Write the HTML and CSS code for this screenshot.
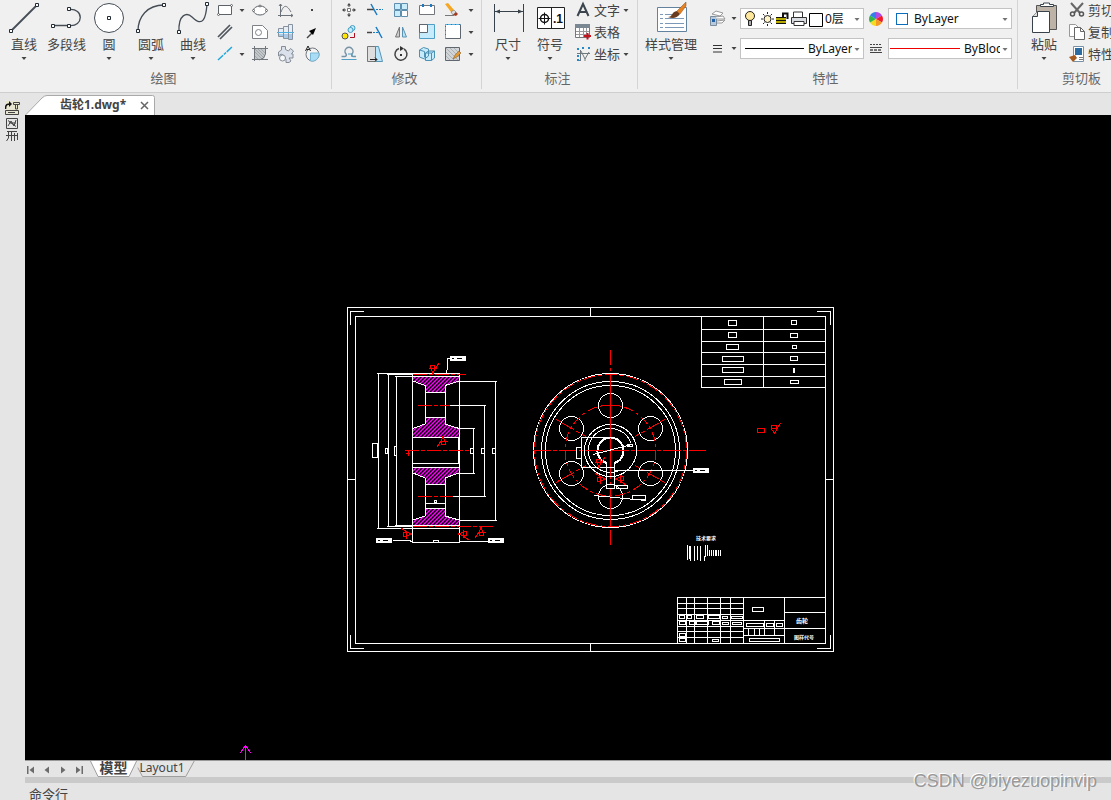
FILE: index.html
```html
<!DOCTYPE html>
<html lang="zh-CN">
<head>
<meta charset="utf-8">
<title>齿轮1.dwg</title>
<link rel="stylesheet" href="styles.css">
</head>
<body>
<svg class="defs" aria-hidden="true">
  <defs>
    <symbol id="caret" viewBox="0 0 10 10"><path d="M2.5 4h5L5 7z" fill="#444"/></symbol>
    <g id="tag"><path d="M0 0h16v5h-16z" fill="#fff"/><path d="M2 2h2v1H2zM7 2h5v1H7z" fill="#000"/></g>
    <g id="rough" fill="none" stroke="#f00"><path d="M-2.500 -3.500h4v3h-4zM-4.500 -.5h8M-2 0L0 4.500L2 0L6 -6"/></g>
  </defs>
</svg>
<div class="app">
  <header class="ribbon">
    <section class="group draw">
      <div class="tools">
        <button class="big"><svg viewBox="3 0 42 35"><path d="M11 31L37 5" stroke="#444c55" stroke-width="1.8"/><g class="node"><path d="M9.500 29.500h3v3h-3zM35.500 3.500h3v3h-3z"/></g></svg><span>直线</span><svg class="caret"><use href="#caret"/></svg></button>
        <button class="big poly"><svg viewBox="45 0 43 35"><path d="M53 25.500H69M69 9.500C84 8 84 27 69 25.500" class="ln"/><g class="node"><path d="M51.500 24.500h3v3h-3zM67.500 24.500h3v3h-3zM67.500 7.500h3v3h-3z"/></g></svg><span>多段线</span></button>
        <button class="big"><svg viewBox="88 0 42 35"><circle cx="109" cy="18" r="14.500" fill="#fff" stroke="#444c55"/><g class="node"><path d="M107.500 16.500h3v3h-3z"/></g></svg><span>圆</span><svg class="caret"><use href="#caret"/></svg></button>
        <button class="big"><svg viewBox="130 0 42 35"><path d="M138 31C138 17 147 5 164 5" class="ln"/><g class="node"><path d="M136.500 29.500h3v3h-3zM162.500 3.500h3v3h-3z"/></g></svg><span>圆弧</span><svg class="caret"><use href="#caret"/></svg></button>
        <button class="big"><svg viewBox="172 0 42 35"><path d="M179 32C178 14 187 12 192 17C203 28 206 18 207 4" class="ln"/><g class="node"><path d="M177.500 30.500h3v3h-3zM205.500 2.500h3v3h-3z"/></g></svg><span>曲线</span><svg class="caret"><use href="#caret"/></svg></button>
        <div class="grid grid-draw">
          <button aria-label="矩形"><svg viewBox="215 0 20 20"><path d="M218.500 5.500h13v9h-13z" fill="#fff" stroke="#5b626a"/><g class="dot"><circle cx="218.500" cy="14.500" r="1"/><circle cx="231.500" cy="5.500" r="1"/></g></svg></button>
          <button aria-label="矩形选项"><svg class="caret"><use href="#caret"/></svg></button>
          <button aria-label="椭圆"><svg viewBox="250 0 20 20"><ellipse cx="260" cy="10.500" rx="6.500" ry="4.500" fill="#fff" stroke="#5b626a"/><g class="dot"><circle cx="260" cy="6" r="1"/><circle cx="253.500" cy="10.500" r="1"/><circle cx="266.500" cy="10.500" r="1"/></g></svg></button>
          <button aria-label="函数曲线"><svg viewBox="276 0 20 20"><path d="M280.500 4V17M278 15.500H293M281 12C284 4 287 5 291 12M279 6l1.500-2l1.500 2M291 14l2 1.500l-2 1.500" fill="none" stroke="#6b7279"/></svg></button>
          <button aria-label="点"><svg viewBox="302 0 20 20"><path d="M311 9h2v2h-2z" fill="#444"/></svg></button>

          <button aria-label="平行线"><svg viewBox="215 22 20 20"><path d="M218 37L230 25M220 39L232 27" stroke="#50565e" stroke-width="1.700"/></svg></button>
          <span></span>
          <button aria-label="面域"><svg viewBox="250 22 20 20"><path d="M252.500 25.500h10l5 5v8h-15z" fill="#fff" stroke="#7c8288"/><circle cx="258.500" cy="32.500" r="3" fill="none" stroke="#7c8288"/></svg></button>
          <button aria-label="轴"><svg viewBox="276 22 20 20"><path d="M278.500 28.500h5v8h-5zM283.500 26.500h5v12h-5zM288.500 24.500h4v15h-4z" fill="#e6edf4" stroke="#8792a0"/><path d="M279 34h4v2h-4zM284 34h4v4h-4zM289 34h3v5h-3z" fill="#a9c9e6"/><path d="M277 32.500h17" stroke="#4db1e2"/></svg></button>
          <button aria-label="箭头"><svg viewBox="302 22 20 20"><path d="M307 38L312 33" stroke="#444" stroke-width="1.500"/><path d="M316 28L309 31L313 35z" fill="#000"/></svg></button>

          <button aria-label="构造线"><svg viewBox="215 44 20 20"><path d="M218 60L232 47" stroke="#20a7dd" stroke-width="1.500" stroke-dasharray="7 1 3 1"/></svg></button>
          <button aria-label="构造线选项"><svg class="caret"><use href="#caret"/></svg></button>
          <button aria-label="填充"><svg viewBox="250 44 20 20"><path d="M255 49h10v8l-2 2h-8z" fill="#c3c7ca"/><path d="M255 56l3 3M255 52l7 7M255 49l9 9M258 49l7 7M261 49l4 4" stroke="#a2a7ab"/><path d="M252 48.500h16M254.500 46v15M265.500 46v8q-1 5-6 6M252 59.500h16" fill="none" stroke="#70767c"/></svg></button>
          <button aria-label="零件"><svg viewBox="276 44 20 20"><path d="M281.500 46.500h4v3l3 1.500l2-2.500l3 2.500l-2 3h1.500v4h-4l2 3l-2 1.500h-3v-3l-2-4l-3-1.500l-2.500 2v-4l3-2z" fill="#dbe1ea" stroke="#858d98"/><circle cx="282.500" cy="58" r="3" fill="#f6f8fa" stroke="#858d98"/></svg></button>
          <button aria-label="局部放大"><svg viewBox="302 44 20 20"><circle cx="312.500" cy="54.500" r="6.500" fill="#f4f4f4" stroke="#70767c"/><path d="M310.500 53h8.500a7 7 0 0 1-8.500 8z" fill="#a9dcf5" stroke="#7db6d2"/><path d="M305.500 51L308 46L310.500 51M306.500 49.500h3" fill="none" stroke="#222"/></svg></button>
        </div>
      </div>
      <h2>绘图</h2>
    </section>

    <section class="group modify">
      <div class="tools">
        <div class="grid grid-modify">
          <button aria-label="移动"><svg viewBox="339 0 20 20"><path d="M347.500 8.500h3v3h-3z" fill="#fff" stroke="#777"/><path d="M349 3l2 2.500h-1.500V7h-1V5.500H347zM349 17l2-2.500h-1.500V13h-1v1.500H347zM342 10l2.500-2v1.500H346v1h-1.500V12zM356 10l-2.500-2v1.500H352v1h1.500V12z" fill="#444"/></svg></button>
          <button aria-label="打断"><svg viewBox="365 0 20 20"><path d="M367 9.500h7" stroke="#444" stroke-width="1.500"/><path d="M376 9.500h7" stroke="#187bc4" stroke-dasharray="2 1"/><path d="M371 4L377 15" stroke="#187bc4" stroke-width="1.500"/></svg></button>
          <button aria-label="阵列"><svg viewBox="391 0 20 20"><path d="M394.500 3.500h6v6h-6zM401.500 3.500h6v6h-6zM394.500 10.500h6v6h-6z" fill="#c9ecfc" stroke="#5f8fae"/><path d="M401.500 10.500h6v6h-6z" fill="#fff" stroke="#5f8fae"/></svg></button>
          <button aria-label="拉伸"><svg viewBox="417 0 20 20"><path d="M419.500 5.500h15v9h-15z" fill="#fff" stroke="#70767c"/><path d="M422 4h2v3h-2zM430 4h2v3h-2z" fill="#187bc4"/></svg></button>
          <button aria-label="删除"><svg viewBox="443 0 20 20"><path d="M445 4l3-1l6 7l-3 2z" fill="#f5a623"/><path d="M451 12l3-2l2 2l-3 3z" fill="#ddd" stroke="#555" stroke-width=".5"/><path d="M453 15l3-3l2 2l-2 2z" fill="#a33b1d"/><path d="M445 15.500h9" stroke="#777"/></svg></button>
          <button aria-label="删除选项"><svg class="caret"><use href="#caret"/></svg></button>

          <button aria-label="复制"><svg viewBox="339 22 20 20"><g fill="#c8ecfb" stroke="#3f9dc5"><circle cx="352.500" cy="28" r="2.500"/><circle cx="350.500" cy="30" r="2.500"/></g><circle cx="345" cy="36" r="3" fill="#ffe600" stroke="#555"/><path d="M350 37.500h4.500V33" fill="none" stroke="#a12"/></svg></button>
          <button aria-label="延伸"><svg viewBox="365 22 20 20"><path d="M367 32.500h5" stroke="#444" stroke-width="1.500"/><path d="M373 32.500h7" stroke="#187bc4" stroke-dasharray="2 1"/><path d="M376 27L382 38" stroke="#187bc4" stroke-width="1.500"/></svg></button>
          <button aria-label="镜像"><svg viewBox="391 22 20 20"><path d="M399.500 27v10h-4z" fill="#ccc" stroke="#777"/><path d="M402.500 27v10h4z" fill="#b9e2f7" stroke="#5a93b2"/></svg></button>
          <button aria-label="缩放"><svg viewBox="417 22 20 20"><path d="M419.500 24.500h15v14h-15z" fill="#c6ebfb" stroke="#4e9ec5"/><path d="M419.500 24.500h8v8h-8z" fill="#fff" stroke="#60666d"/></svg></button>
          <button aria-label="裁剪"><svg viewBox="443 22 20 20"><path d="M445.500 24.500h15v14h-15z" fill="#fff" stroke="#60666d"/><path d="M445.500 38v-13.500h15" fill="none" stroke="#5bb3e4" stroke-dasharray="3 1"/></svg></button>
          <button aria-label="裁剪选项"><svg class="caret"><use href="#caret"/></svg></button>

          <button aria-label="偏移"><svg viewBox="339 44 20 20"><path d="M341.500 56.500h3.500a1.500 1.500 0 0 0 1-2.500a4 4 0 1 1 6 0a1.500 1.500 0 0 0 1 2.500h3" fill="none" stroke="#7794a6" stroke-width="1.500"/><path d="M341.500 59.500h15M348 54h4v3" fill="none" stroke="#4e9ec5"/></svg></button>
          <button aria-label="拔模"><svg viewBox="365 44 20 20"><path d="M375.500 46.500h3l4 15h-7z" fill="#b9e6fb" stroke="#5a93b2"/><path d="M367.500 46.500h8v15h-8z" fill="#dedede" stroke="#777"/><path d="M370 59.500h7m-2-2l2 2l-2 2" fill="none" stroke="#222"/></svg></button>
          <button aria-label="旋转"><svg viewBox="391 44 20 20"><path d="M399 48.500A6 6 0 1 0 404 49" fill="none" stroke="#444" stroke-width="1.500"/><path d="M400 46l4 2.500l-4 2.500z" fill="#333"/><path d="M400 54h2v2h-2z" fill="#333"/></svg></button>
          <button aria-label="三维"><svg viewBox="417 44 20 20"><path d="M419.500 50l4-2.500l5 1.500v7l-4 3l-5-2zM425.500 53l3-2h6v7l-3 2.500h-6z" fill="#c6ebfb" stroke="#4e91b3"/><path d="M425.500 53h6v7.500M431.500 53l3-2M419.500 50l5 1.500v6" fill="none" stroke="#4e91b3"/></svg></button>
          <button aria-label="编辑填充"><svg viewBox="443 44 20 20"><path d="M446 48h13v12h-13z" fill="#d2d5d8"/><path d="M446 56l4 4M446 52l8 8M446 48l12 12M450 48l9 9M454 48l5 5" stroke="#adb2b6"/><path d="M445.500 47.500h14v13h-14z" fill="none" stroke="#60666d"/><path d="M453 59l2-4l4-4l2 2l-4 4z" fill="#e29a35" stroke="#7d5525" stroke-width=".5"/></svg></button>
          <button aria-label="编辑填充选项"><svg class="caret"><use href="#caret"/></svg></button>
        </div>
      </div>
      <h2>修改</h2>
    </section>

    <section class="group annotate">
      <div class="tools">
        <button class="big"><svg viewBox="487 0 42 35"><path d="M494.500 4v28M523.500 4v28M495 11.500h28" stroke="#39424b"/><path d="M495 11.500l5-2v4zM523 11.500l-5-2v4z" fill="#39424b"/></svg><span>尺寸</span><svg class="caret"><use href="#caret"/></svg></button>
        <button class="big"><svg viewBox="529 0 42 35"><path d="M537.500 7.500h27v21h-27zM551.500 7.500v21" fill="#fff" stroke="#222"/><circle cx="544.500" cy="18.500" r="4" fill="none" stroke="#111" stroke-width="1.500"/><path d="M538.500 18.500h12M544.500 12.500v12" stroke="#111"/><text x="553" y="23" font-size="12" font-weight="700" fill="#111">.1</text></svg><span>符号</span><svg class="caret"><use href="#caret"/></svg></button>
        <div class="rows">
          <button><svg viewBox="573 0 20 20"><path d="M577.500 16L583 4L588.500 16M580 12h6" fill="none" stroke="#3c454e" stroke-width="2"/></svg><span>文字</span><svg class="caret"><use href="#caret"/></svg></button>
          <button><svg viewBox="573 22 20 20"><path d="M575.500 24.500h14v13h-14z" fill="#fff" stroke="#777"/><path d="M575 24h15v4h-15z" fill="#7a8894"/><path d="M576 31.500h13M576 34.500h13M579.500 28v9M583.500 28v9M586.500 28v9" stroke="#999"/><path d="M584 36h7M587.500 33v6.500" stroke="#c4141e" stroke-width="2"/></svg><span>表格</span></button>
          <button><svg viewBox="573 44 20 20"><path d="M577 53.500h13M580.500 50v11M577 60.500h4M581 51l4 8l4-7M585 59v2" fill="none" stroke="#70787f"/><path d="M577 49h2m3-1h2m4 0h2m-13 8h2m-2 4h2" stroke="#2488cc" stroke-width="2"/></svg><span>坐标</span><svg class="caret"><use href="#caret"/></svg></button>
        </div>
      </div>
      <h2>标注</h2>
    </section>

    <section class="group props">
      <div class="tools">
        <button class="big style"><svg viewBox="644 0 54 35"><path d="M657.500 7.500h29v24h-29z" fill="#fff" stroke="#62829e"/><path d="M660 14.500h3m2 0h8m-13 4h3m2 0h19m-24 5h3m2 0h19m-24 4h3m2 0h19" stroke="#7b98b6"/><path d="M668 17c5 0 3-5 9-6l3 3c-3 4-7 5-12 3z" fill="#6a3c1e"/><path d="M677 11l7-7l2-2v4l-6 8z" fill="#e58121" stroke="#8a4d1b" stroke-width=".5"/></svg><span>样式管理</span><svg class="caret"><use href="#caret"/></svg></button>
        <div class="fields">
          <button aria-label="图层"><svg viewBox="706 8 20 20"><path d="M709.500 16.500h6v9h-6z" fill="#b7c9dd" stroke="#7c8c9c"/><path d="M711 19h3v3h-3z" fill="#1f63a6"/><path d="M711 14l4-3l7 2l-3 3zM714 17l8-1l2 3l-8 0M716 21l8-1l-3 3h-5" fill="#fff" stroke="#999"/></svg></button>
          <button aria-label="图层选项"><svg class="caret"><use href="#caret"/></svg></button>
          <label class="combo layer"><svg viewBox="741 9 84 19" class="layer-icons"><circle cx="750" cy="16" r="4.500" fill="#ffe89c" stroke="#222"/><path d="M748.500 20.500h3v5h-3z" fill="#aaa" stroke="#222"/><circle cx="767.500" cy="19" r="3.500" fill="#fff4c8" stroke="#222"/><path d="M767.500 12v2m0 10v2M761 19h2m9 0h2M763 14l1.500 1.500m6 7L772 24M763 24l1.500-1.500m6-7L772 14" stroke="#222"/><path d="M776 17h10v7h-10z" fill="#b8ab00"/><path d="M776 17.500h10M776 20.500h10M776 23.500h10" stroke="#111"/><path d="M783 17v-3.500h4.500v5.500" fill="none" stroke="#111" stroke-width="2"/><path d="M793.500 18v-6h9v6" fill="#fff" stroke="#333"/><path d="M791.500 17.500h15v6h-15z" fill="#d9dde2" stroke="#333"/><path d="M794 21.500h10v4h-10z" fill="#fff" stroke="#333"/><path d="M809.500 13.500h13v13h-13z" fill="#fff" stroke="#000"/></svg><select aria-label="当前图层"><option>0层</option></select><svg class="caret"><use href="#caret"/></svg></label>
          <button aria-label="颜色"><svg viewBox="865 8 20 20"><path d="M875 19V12A7 7 0 0 1 881 15.500z" fill="#b049e8"/><path d="M875 19L881 15.500A7 7 0 0 1 881 22.500z" fill="#f3182c"/><path d="M875 19L881 22.500A7 7 0 0 1 875 26z" fill="#f49a22"/><path d="M875 19V26A7 7 0 0 1 869 22.500z" fill="#f4dc22"/><path d="M875 19L869 22.500A7 7 0 0 1 869 15.500z" fill="#35b548"/><path d="M875 19L869 15.500A7 7 0 0 1 875 12z" fill="#337ee8"/></svg></button>
          <label class="combo color"><span class="swatch"></span><select aria-label="当前颜色"><option>ByLayer</option></select><svg class="caret"><use href="#caret"/></svg></label>

          <button aria-label="线型"><svg viewBox="706 38 20 20"><path d="M712 45.500h9M712 48.500h9M712 52h9" stroke="#333"/></svg></button>
          <button aria-label="线型选项"><svg class="caret"><use href="#caret"/></svg></button>
          <label class="combo type"><span class="line"></span><select aria-label="当前线型"><option>ByLayer</option></select><svg class="caret"><use href="#caret"/></svg></label>
          <button aria-label="线宽"><svg viewBox="865 38 20 20"><path d="M869 44.500h12" stroke="#444" stroke-dasharray="2 1"/><path d="M869 47.500h12M869 52.500h12" stroke="#444"/><path d="M869 50h12" stroke="#777" stroke-width="2" stroke-dasharray="3 1"/></svg></button>
          <label class="combo weight"><span class="line"></span><select aria-label="当前线宽"><option>ByBlock</option></select><svg class="caret"><use href="#caret"/></svg></label>
        </div>
      </div>
      <h2>特性</h2>
    </section>

    <section class="group clip">
      <div class="tools">
        <button class="big"><svg viewBox="1023 0 42 35"><path d="M1036.500 5.500h20v24h-20z" fill="#bdb4a7" stroke="#555"/><path d="M1040.500 6.500v-2h3v-1.500h6v1.500h4v2z" fill="#fff" stroke="#39424b"/><path d="M1032.500 16.500l5-5h12v21h-17z" fill="#fff" stroke="#39424b"/><path d="M1032.500 16.500h5v-5" fill="#ddd" stroke="#39424b"/></svg><span>粘贴</span><svg class="caret"><use href="#caret"/></svg></button>
        <div class="rows">
          <button><svg viewBox="1067 0 20 20"><path d="M1071 3l9 10M1083 3l-9 10" stroke="#666" stroke-width="2"/><g fill="none" stroke="#555" stroke-width="1.500"><circle cx="1072.500" cy="14" r="2"/><circle cx="1081.500" cy="14" r="2"/></g></svg><span>剪切</span></button>
          <button><svg viewBox="1067 22 20 20"><path d="M1069.500 24.500h6l4 4v8h-10z" fill="#fff" stroke="#999"/><path d="M1074.500 27.500h6l4 4v8h-10z" fill="#fff" stroke="#666"/><path d="M1080.500 27.500v4h4" fill="none" stroke="#666"/></svg><span>复制</span></button>
          <button><svg viewBox="1067 44 20 20"><path d="M1073.500 46.500h10v15h-10z" fill="#fff" stroke="#7890a5"/><path d="M1075 48h7v7h-7z" fill="#2b6ca3"/><path d="M1079 57.500h4m-4 2h4" stroke="#777"/><path d="M1069 57l6-2l2 3l-4 4z" fill="#a55a1f"/></svg><span>特性</span></button>
        </div>
      </div>
      <h2>剪切板</h2>
    </section>
  </header>

  <div class="work">
    <aside class="side">
      <button aria-label="图库"><svg viewBox="5 100 15 42"><path d="M5 101h15v14H5z" fill="#e8e6d0"/><path d="M5.500 109c0-5 2-5 5-5" fill="none" stroke="#111" stroke-width="1.500"/><path d="M9 101l3 3l-3 3z" fill="#111"/><path d="M13.500 102.500h6v2h-6zM15.500 105v4h2v-4" fill="none" stroke="#444"/><path d="M5.500 110.500h13v4h-13zM8 112.500h7" fill="none" stroke="#444"/><path d="M6.500 118.500h11v10h-11zM8 120.500l8 6M8 126l3-5l3 5l2-6M9 123h7" fill="none" stroke="#444"/><path d="M7 131.500h10M6 135.500h12M8.500 131v7l-2 3M11.500 131v10M14.500 133v8M17.500 133v7" fill="none" stroke="#444"/></svg></button>
    </aside>
    <main class="doc">
      <nav class="tabs">
        <div class="tab">
          <svg class="tab-shape" viewBox="0 0 130 20"><path d="M.5 20L17 3Q19.500 .5 22 .5H127.500Q129.500 .5 129.500 2.500V20" fill="#fff" stroke="#a9a9a9"/></svg>
          <a href="#drawing">齿轮1.dwg*</a>
          <button aria-label="关闭"><svg viewBox="0 0 9 9"><path d="M1 1l7 7M8 1l-7 7" stroke="#666" stroke-width="1.500"/></svg></button>
        </div>
      </nav>
      <div class="canvas" id="drawing">
        <svg viewBox="25 115 1086 645" fill="none" stroke="#fff" shape-rendering="crispEdges">
          <defs>
            <clipPath id="rim"><path d="M413 377h46v5l-14 4v6h-20v-6l-12-4zM425 418h20v6l14 4v9h-46v-9l12-4zM413 468h46v5l-14 5v6h-20v-6l-12-5zM425 509h20v7l14 4v5h-46v-5l12-4z"/></clipPath>
          </defs>
          <!-- sheet frame -->
          <path d="M347.500 307.500h486v344h-486zM355.500 316.500h470v327h-470z"/>
          <path d="M817 311.500h13.500V325M817 648.500h13.500V635M364 311.500h-13.500V325M364 648.500h-13.500V635M347 479.500h8M825 479.500h8M590.500 307v9M590.500 643v9"/>
          <!-- parameter table -->
          <path d="M701.500 316v71.500H825M763.500 316v71M701 329.500h124M701 341.500h124M701 352.500h124M701 364.500h124M701 376.500h124"/>
          <path d="M728.500 320.500h8v5h-8zM728.500 332.500h8v5h-8zM726.500 344.500h12v5h-12zM722.500 356.500h21v5h-21zM722.500 367.500h21v5h-21zM724.500 379.500h17v5h-17zM791.500 320.500h5v4h-5zM790.500 333.500h7v4h-7zM792.500 345.500h4v3h-4zM790.500 356.500h7v4h-7zM793.500 368.500h1v4h-1zM790.500 380.500h8v3h-8z"/>
          <g stroke="#f00"><path d="M757.500 428.500h7v4h-7zM771.500 425.500h5v3h-5zM771.500 429L774.500 433.500L777 429L780.500 423"/></g>
          <!-- section view: wide dashed stroke gives the diagonal hatch -->
          <g clip-path="url(#rim)"><path d="M360 375L512 527" stroke="#f0f" stroke-width="300" stroke-dasharray="1.400 1.430" shape-rendering="auto"/></g>
          <path d="M412.500 373v170M459.500 373v170M377 373.500h82M395 376.500h64M413 381l12 4.500V424l-12 4.500M459 381l-14 4.500V424l14 4.500M425 392.500h20M425 417.500h20M412 437.500h47M458.500 437v26M412 463.500h47M412 467.500h47M413 473l12 5V516l-12 4M459 473l-14 5V516l14 4M425 484.500h20M425 503.500h20M425 508.500h20M412 525.500h47M377 528.500h82M434.500 500.500h2v2h-2z"/>
          <path d="M378.500 374v154M388.500 374v152M396.500 376v149M387 374.500h25M387 526.500h25M395 525.500h17M372.500 443.500h5v14h-5zM385.500 448.500h2v5h-2zM394.500 446.500h2v9h-2z"/>
          <path d="M459 381.500h38M495.500 381v139M459 520.500h38M450 405.500h36M484.500 405v91M452 496.500h34M459 428.500h16M473.500 428v45M459 473.500h16M470.500 448.500h3v5h-3zM481.500 448.500h3v5h-3zM492.500 448.500h3v5h-3z"/>
          <path d="M450 358.500h-2.500V368L446 373M393 540.500h16l3 1M412 542.500h47M459 541.500h29M433.500 540.500h5v2h-5z"/>
          <use href="#tag" x="450" y="356" stroke="none"/><use href="#tag" x="376" y="538" stroke="none"/><use href="#tag" x="488" y="538" stroke="none"/>
          <g stroke="#f00"><path stroke-dasharray="14 2 4 2" d="M413 374.500h53M418 405.500h32M405 450.500h65M418 496.500h35M413 526.500h81"/><path d="M405 450.500h5M408.500 450v6M406 453.500h4"/></g>
          <use href="#rough" x="433" y="369"/>
          <use href="#rough" transform="translate(443 441) rotate(180)"/>
          <use href="#rough" transform="translate(407 534) rotate(-90)"/>
          <use href="#rough" transform="translate(463 534) rotate(90)"/>
          <use href="#rough" transform="translate(481 532) rotate(180)"/>
          <!-- front view -->
          <circle cx="610.500" cy="450.500" r="77"/><circle cx="610.500" cy="450.500" r="69"/><circle cx="610.500" cy="450.500" r="65"/>
          <circle cx="610.500" cy="450.500" r="26"/><path d="M618 471A22 22 0 1 1 631 443"/><path d="M606.500 463A13 13 0 1 1 614.500 463" stroke-width="2"/>
          <circle cx="610.500" cy="405.500" r="12"/><circle cx="610.500" cy="496.500" r="12"/><circle cx="571.500" cy="428.500" r="12"/><circle cx="650.500" cy="428.500" r="12"/><circle cx="571.500" cy="473.500" r="12"/><circle cx="650.500" cy="473.500" r="12"/>
          <g stroke="#f00"><circle cx="610.500" cy="450.500" r="76" stroke-dasharray="12 3 4 3"/><circle cx="610.500" cy="450.500" r="45.500" stroke-dasharray="10 3 3 3"/>
          <path d="M610.500 350v15M610.500 368v3M610.500 374v105M610.500 482v3M610.500 488v39M610.500 530v15M602 405.500h17"/><path d="M533 450.500h173" stroke-dasharray="18 2 4 2"/><path d="M556 419.500l30 17M665 419.500l-30 17M556 482.500l30-17M665 482.500l-30-17" stroke-dasharray="5 2 14 2"/></g>
          <path d="M606.500 463v26M614.500 463v26M606 476.500h8M606 484.500h8M606 488.500h8M613 437.500h-31.500v30H614M576.500 447.500h5v11h-5zM614 470.500h79M593 454.500L632 444.500M627.500 444.500h5v2h-5zM616.500 485.500h11v3h-11zM594 495.500L646 500.500M632.500 495.500h13v4h-13z"/>
          <use href="#tag" x="693" y="468" stroke="none"/>
          <use href="#rough" x="599" y="463"/><use href="#rough" transform="translate(601 479) rotate(-90)"/><use href="#rough" transform="translate(620 479) rotate(90)"/>
          <!-- notes -->
          <text x="696" y="540" class="note">技术要求</text>
          <path d="M687.500 545v15M689.500 546v13M690.500 546v15M694.500 546v15M697.500 546v14M700.500 546v15M705.500 545v12M704.500 556v5M707.500 545v11M709.500 550v6M711.500 550v6M713.500 550v6M715.500 550v6M716.500 550v6M718.500 550v6M720.500 550v6"/>
          <!-- title block -->
          <path d="M677.500 643v-45.500H825M686.500 597v46M694.500 597v46M707.500 597v46M720.500 597v46M730.500 597v46M743.500 597v46M677 603.500h66M677 608.500h66M677 614.500h66M677 620.500h107M677 626.500h66M677 631.500h66M677 637.500h66M784.500 597v46M784 612.500h41M743 628.500h82M743 635.500h41M764.500 620v15M774.500 620v15M748.500 628v7M754.500 628v7M759.500 628v7"/>
          <path d="M752.500 607.500h11v4h-11zM746.500 623.500h17v3h-17zM766.500 623.500h7v3h-7zM776.500 623.500h6v3h-6zM749.500 638.500h30v3h-30zM679.500 615.500h5v3h-5zM687.500 615.500h4v3h-4zM696.500 615.500h7v3h-7zM708.500 615.500h11v3h-11zM722.500 616.500h5v2h-5zM731.500 616.500h11v2h-11zM679.500 621.500h6v3h-6zM689.500 621.500h6v3h-6zM696.500 621.500h12v3h-12zM712.500 621.500h7v3h-7zM722.500 622.500h6v2h-6zM732.500 622.500h9v2h-9zM679.500 633.500h6v3h-6zM679.500 638.500h6v3h-6zM712.500 639.500h6v2h-6z"/>
          <text x="796" y="623" class="note name">齿轮</text>
          <text x="794" y="639" class="note">图样代号</text>
          <!-- axis arrow -->
          <path stroke="#f0f" d="M245.500 745v15M245.500 745l-5 8M245.500 745l5 8"/>
        </svg>
      </div>
      <nav class="sheets">
        <button aria-label="第一页"><svg viewBox="0 0 10 10"><path d="M1 1h1.500v8H1zM8 1.500v7L3.500 5z"/></svg></button>
        <button aria-label="上一页"><svg viewBox="0 0 10 10"><path d="M7 1.500v7L2.500 5z"/></svg></button>
        <button aria-label="下一页"><svg viewBox="0 0 10 10"><path d="M3 1.500v7L7.500 5z"/></svg></button>
        <button aria-label="最后一页"><svg viewBox="0 0 10 10"><path d="M2 1.500v7L6.500 5zM7.500 1H9v8H7.500z"/></svg></button>
        <a href="#drawing" class="sheet model"><svg viewBox="0 0 50 17"><path d="M0 0L8 16.500H41L49 0" fill="#fff" stroke="#999"/></svg><span>模型</span></a>
        <a href="#layout1" class="sheet"><svg viewBox="0 0 62 17"><path d="M1 7L6 16.500H52L61 0" fill="none" stroke="#999"/></svg><span>Layout1</span></a>
      </nav>
      <footer class="command">命令行</footer>
    </main>
  </div>
  <div class="watermark">CSDN @biyezuopinvip</div>
</div>
</body>
</html>
```
FILE: styles.css
```css
* { box-sizing: border-box; }
body {
  margin: 0;
  font: 13px/18px "Noto Sans", "Noto Sans CJK SC", sans-serif;
  color: #444;
  background: #e5e5e5;
}
button, select { font: inherit; color: inherit; }
button { display: flex; align-items: center; justify-content: center; padding: 0; border: 0; background: none; }
a { color: inherit; text-decoration: none; }
svg { display: block; flex: none; }
.defs { position: absolute; width: 0; height: 0; }
.app { display: flex; flex-direction: column; height: 100vh; overflow: hidden; position: relative; }

.ribbon { display: flex; flex: none; overflow: hidden; background: #f0f0f0; border-bottom: 1px solid #cecece; }
.group { flex: none; border-right: 1px solid #d4d4d4; margin-bottom: 3px; }
.group h2 { margin: 0; padding: 0 4px 2px 0; font-size: 13px; line-height: 18px; font-weight: 400; text-align: center; color: #666; }
.tools { display: flex; height: 69px; align-items: flex-start; }
.draw { width: 332px; }
.draw .tools { padding-left: 3px; }
.modify { width: 150px; }
.modify .tools { padding-left: 4px; }
.annotate { width: 156px; }
.annotate .tools { padding-left: 5px; }
.props { width: 380px; }
.props .tools { padding-left: 6px; }
.clip { width: 132px; }
.clip .tools { padding-left: 5px; }

.big { flex: none; flex-direction: column; justify-content: flex-start; width: 42px; white-space: nowrap; }
.big > svg:first-child { width: 100%; height: 35px; }
.big.poly { width: 43px; }
.big.style { width: 54px; }
.caret, .big .caret { width: 10px; height: 10px; }
.ln { fill: none; stroke: #444c55; stroke-width: 1.3; }
.node { fill: #fff; stroke: #222b34; }
.dot { fill: #fff; stroke: #444; stroke-width: 0.7; }
.big text { font-family: "Liberation Sans", sans-serif; }

.grid { display: grid; grid-auto-rows: 20px; row-gap: 2px; }
.grid-draw { grid-template-columns: 22px 11px 26px 26px 26px; }
.grid-modify { grid-template-columns: repeat(5, 26px) 9px; }
.grid svg:not(.caret), .rows svg:not(.caret), .fields button svg:not(.caret) { width: 20px; height: 20px; }
.rows { display: grid; grid-auto-rows: 20px; row-gap: 2px; padding-left: 2px; white-space: nowrap; }
.rows button { justify-content: flex-start; gap: 1px; }
.rows span { line-height: 20px; padding-bottom: 1px; }

.fields {
  display: grid;
  grid-template-columns: 22px 12px 124px 24px 124px;
  grid-auto-rows: 21px;
  row-gap: 9px;
  padding: 8px 0 0 8px;
}
.fields button { height: 20px; }
.combo { display: flex; align-items: center; min-width: 0; overflow: hidden; padding-right: 1px; background: #fff; border: 1px solid #c3c3c3; color: #111; font-size: 12px; }
.combo select { flex: 1; min-width: 0; height: 18px; padding: 0; border: 0; appearance: none; background: none; overflow: hidden; text-overflow: clip; }
.combo .caret { opacity: 0.75; }
.layer-icons { width: 84px; height: 19px; }
.swatch { width: 12px; height: 12px; margin: 0 6px 0 7px; border: 1px solid #0a6ebd; flex: none; }
.combo .line { flex: none; height: 1px; background: #000; }
.type .line { width: 59px; margin: 0 4px; }
.weight .line { width: 70px; margin: 0 4px 0 1px; background: #e00; }

.work { display: flex; flex: 1; min-height: 0; }
.side { flex: none; width: 25px; padding: 7px 0 0 5px; }
.side svg { width: 15px; height: 42px; }
.doc { display: flex; flex-direction: column; flex: 1; min-width: 0; }
.tabs { display: flex; padding-top: 2px; }
.tab { position: relative; display: flex; align-items: center; gap: 14px; width: 130px; height: 20px; padding-left: 35px; }
.tab-shape { position: absolute; inset: 0; width: 130px; height: 20px; }
.tab a, .tab button { position: relative; }
.tab a { font-size: 12px; font-weight: 700; white-space: nowrap; }
.tab button svg { width: 9px; height: 9px; }
.canvas { flex: 1; min-height: 0; background: #000; }
.canvas > svg { width: 100%; height: 100%; }
.note { font-family: "Noto Sans CJK SC", sans-serif; font-size: 5px; font-weight: 700; fill: #fff; stroke: none; }
.note.name { font-size: 6px; }

.sheets { display: flex; height: 17px; flex: none; border-top: 1px solid #999; }
.sheets button { justify-content: flex-start; width: 16px; height: 17px; padding-left: 1px; }
.sheets button svg { width: 10px; height: 10px; fill: #6b6b6b; }
.sheet { position: relative; width: 46px; height: 16px; text-align: center; font-size: 12px; line-height: 14px; }
.sheet svg { position: absolute; top: 0; left: 0; height: 16px; width: 62px; }
.sheet span { position: relative; }
.sheet.model svg { width: 50px; z-index: 1; }
.sheet.model span { z-index: 2; font-size: 14px; padding-left: 3px; }
.sheet.model { font-weight: 700; z-index: 1; }
.sheet:last-child { width: 62px; padding-right: 8px; }
.command { flex: none; height: 23px; overflow: hidden; border-top: 6px solid #cacaca; padding: 2px 4px; }

.watermark {
  position: absolute;
  right: 14px;
  bottom: 8px;
  font: 18px/22px "Liberation Sans", sans-serif;
  color: #999;
  text-shadow: -1px -1px 0 #fff;
}
```
